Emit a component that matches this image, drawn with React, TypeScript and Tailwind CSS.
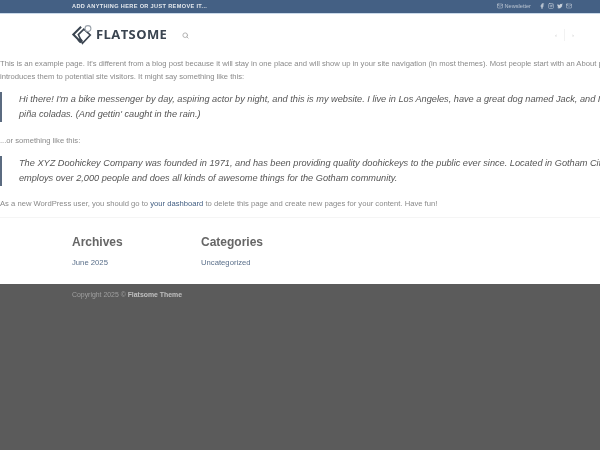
import { Facebook, Instagram, Mail, Search, Twitter } from "lucide-react";

function Logo() {
  return (
    <svg width="22" height="22" viewBox="0 0 24 24" fill="none" className="shrink-0">
      <path d="M11 3 L2.5 11.5 L11 20" stroke="#3a4450" strokeWidth="2.2" />
      <path d="M8 11.5 L14 5.5 L21 12 L12.5 21 Z" fill="#fff" stroke="#3a4450" strokeWidth="1.8" />
      <path d="M10 15 L13 18 L10 21 L7 18 Z" fill="#3a4450" />
      <circle cx="18.5" cy="5" r="3.2" fill="#fff" stroke="#9aa2ab" strokeWidth="1.2" />
    </svg>
  );
}

function Quote({ lines }: { lines: string[] }) {
  return (
    <blockquote className="flex h-[30px] flex-col justify-center border-l-2 border-[#5b6b80] pl-[17px] text-[9.2px] italic leading-[15px] text-[#555]">
      {lines.map((line) => (
        <p key={line} className="whitespace-nowrap">
          {line}
        </p>
      ))}
    </blockquote>
  );
}

export default function App() {
  return (
    <div className="h-[450px] w-[600px] overflow-hidden bg-white font-['Liberation_Sans',Arial,sans-serif] text-[#8a8a8a] blur-[0.5px]">
      <div className="flex h-[14px] items-center justify-between border-b border-[#c9d9ea] bg-[#446084] pl-[72px] pr-[28px]">
        <span className="text-[5.6px] font-bold uppercase tracking-[0.35px] text-white/85">
          Add anything here or just remove it...
        </span>
        <div className="flex items-center text-white/70">
          <Mail size={6} strokeWidth={2} />
          <span className="ml-[2px] mr-[8px] text-[5.6px] text-white/60">Newsletter</span>
          <div className="flex items-center gap-[3px]">
            <Facebook size={6} fill="currentColor" strokeWidth={1} />
            <Instagram size={6} strokeWidth={2} />
            <Twitter size={6} fill="currentColor" strokeWidth={1} />
            <Mail size={6} strokeWidth={2} />
          </div>
        </div>
      </div>

      <header className="flex h-[42px] items-center pl-[71px] pr-[26px]">
        <Logo />
        <span className="ml-[3px] font-['Open_Sans',sans-serif] text-[13px] font-bold tracking-[0.4px] text-[#3a4450]">
          FLATSOME
        </span>
        <Search size={7} strokeWidth={3} className="ml-[15px] text-[#aaa]" />
        <div className="ml-auto flex items-center gap-[7px] text-[6px] text-[#ccc]">
          <span>‹</span>
          <span className="h-[12px] w-px bg-[#f2f2f2]" />
          <span>›</span>
        </div>
      </header>

      <main className="flex h-[162px] flex-col border-b border-[#f5f5f5] pt-[1px] text-[7.65px] leading-[13px]">
        <p className="whitespace-nowrap">
          This is an example page. It's different from a blog post because it will stay in one place and will show up in your site navigation (in most themes). Most people start with an About page that
        </p>
        <p className="mb-[9px] whitespace-nowrap">
          introduces them to potential site visitors. It might say something like this:
        </p>
        <Quote
          lines={[
            "Hi there! I'm a bike messenger by day, aspiring actor by night, and this is my website. I live in Los Angeles, have a great dog named Jack, and I like",
            "piña coladas. (And gettin' caught in the rain.)",
          ]}
        />
        <p className="mb-[9px] mt-[12px] whitespace-nowrap">...or something like this:</p>
        <Quote
          lines={[
            "The XYZ Doohickey Company was founded in 1971, and has been providing quality doohickeys to the public ever since. Located in Gotham City, XYZ",
            "employs over 2,000 people and does all kinds of awesome things for the Gotham community.",
          ]}
        />
        <p className="mt-[11px] whitespace-nowrap">
          As a new WordPress user, you should go to <span className="text-[#446084]">your dashboard</span> to delete this page and create new pages for your content. Have fun!
        </p>
      </main>

      <section className="flex h-[66px] gap-[72px] pl-[72px] pt-[16px]">
        <div className="w-[57px]">
          <h3 className="text-[12px] font-bold leading-[16px] text-[#666]">Archives</h3>
          <p className="mt-[7px] text-[7.7px] leading-[12px] text-[#5a6f8a]">June 2025</p>
        </div>
        <div>
          <h3 className="text-[12px] font-bold leading-[16px] text-[#666]">Categories</h3>
          <p className="mt-[7px] text-[7.7px] leading-[12px] text-[#5a6f8a]">Uncategorized</p>
        </div>
      </section>

      <footer className="h-[166px] bg-[#5b5b5b] pl-[72px] pt-[6px] text-[6.9px] leading-[10px] text-white/40">
        Copyright 2025 © <span className="font-bold text-white/60">Flatsome Theme</span>
      </footer>
    </div>
  );
}
